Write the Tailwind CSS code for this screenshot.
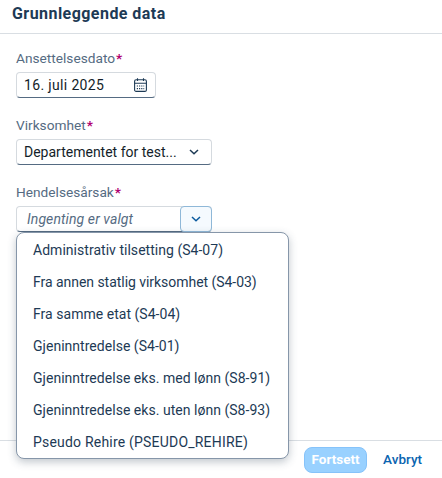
<!DOCTYPE html>
<html lang="no"><head><meta charset="utf-8">
<script src="https://cdn.jsdelivr.net/npm/@tailwindcss/browser@4"></script>
</head>
<body class="bg-white overflow-hidden">
<div class="relative flex flex-col w-[442px] h-[478px] font-['Roboto',sans-serif] text-[14px] text-[#131e29]">
  <header class="h-[34px] shrink-0 border-b border-[#d9dee3] pl-3 text-[16px] tracking-[0.45px] leading-[28px] font-bold text-[#1d3a55]">Grunnleggende data</header>
  <main class="flex-1 pl-4 pt-[14px] flex flex-col">
    <label class="h-[24px] leading-[20px] text-[#556b82] text-[13.7px]">Ansettelsesdato<span class="text-[#b0006f] font-bold ml-[1px]">*</span></label>
    <div class="w-[140px] h-[26px] flex items-center justify-between pl-[7px] pr-[8px] rounded-[4px] border border-[#d5dadf] border-b-[#556b82] bg-white">
      <span class="text-[14px] tracking-[0.35px]">16. juli 2025</span>
      <svg width="13" height="14" viewBox="0 0 13 14" fill="none" stroke="#1d3a55" stroke-width="1.1"><rect x=".6" y="1.8" width="11.8" height="11.6" rx="1.5"/><path d="M.6 5.2h11.8M3.5 .3v2.8M9.5 .3v2.8"/><path d="M2.8 8h7.4M2.8 10.6h7.4" stroke-dasharray="1.2 1"/></svg>
    </div>
    <label class="mt-[17px] h-[24px] leading-[20px] text-[#556b82] text-[13.7px]">Virksomhet<span class="text-[#b0006f] font-bold ml-[1px]">*</span></label>
    <div class="w-[196px] h-[26px] flex items-center justify-between pl-[7px] pr-[12px] rounded-[4px] border border-[#d5dadf] border-b-[#556b82] bg-white">
      <span class="text-[14px]">Departementet for test...</span>
      <svg width="10" height="6" viewBox="0 0 10 6" fill="none" stroke="#1d3a55" stroke-width="1.5"><path d="M1 1l4 3.8L9 1"/></svg>
    </div>
    <label class="mt-[17px] h-[24px] leading-[20px] text-[#556b82] text-[13.7px]">Hendelsesårsak<span class="text-[#b0006f] font-bold ml-[1px]">*</span></label>
    <div class="w-[196px] h-[26px] flex items-center justify-between pl-[10px] rounded-[4px] border border-[#d5dadf] border-b-[#556b82] bg-white">
      <span class="text-[14px] tracking-[0.1px] italic text-[#556b82]">Ingenting er valgt</span>
      <span class="w-[32px] h-[26px] -mr-[1px] flex items-center justify-center rounded-[4px] border border-[#8fb8d8] bg-[#f5fafe]">
        <svg width="10" height="6" viewBox="0 0 10 6" fill="none" stroke="#0a5a9e" stroke-width="1.5"><path d="M1 1l4 3.8L9 1"/></svg>
      </span>
    </div>
  </main>
  <footer class="h-[38px] shrink-0 border-t border-[#d9dee3] flex items-center justify-end pr-5 gap-4">
    <button class="w-[63px] h-[26px] rounded-[8px] border border-[#86c3fa] bg-[#99d1ff] text-white font-bold text-[13.5px]">Fortsett</button>
    <span class="text-[#0a64b0] text-[13.5px] font-medium">Avbryt</span>
  </footer>
  <ul class="absolute left-4 top-[232px] w-[273px] h-[227px] py-[1px] bg-white rounded-[8px] border border-[#8696a9] shadow-[0_3px_8px_rgba(50,70,90,0.3)] text-[14px] tracking-[0.03px] text-[#1d3a55]">
    <li class="h-[32px] pl-4 flex items-center">Administrativ tilsetting (S4-07)</li>
    <li class="h-[32px] pl-4 flex items-center tracking-[-0.04px]">Fra annen statlig virksomhet (S4-03)</li>
    <li class="h-[32px] pl-4 flex items-center">Fra samme etat (S4-04)</li>
    <li class="h-[32px] pl-4 flex items-center">Gjeninntredelse (S4-01)</li>
    <li class="h-[32px] pl-4 flex items-center">Gjeninntredelse eks. med lønn (S8-91)</li>
    <li class="h-[32px] pl-4 flex items-center">Gjeninntredelse eks. uten lønn (S8-93)</li>
    <li class="h-[32px] pl-4 flex items-center tracking-[0.2px]">Pseudo Rehire (PSEUDO_REHIRE)</li>
  </ul>
</div>
</body></html>
